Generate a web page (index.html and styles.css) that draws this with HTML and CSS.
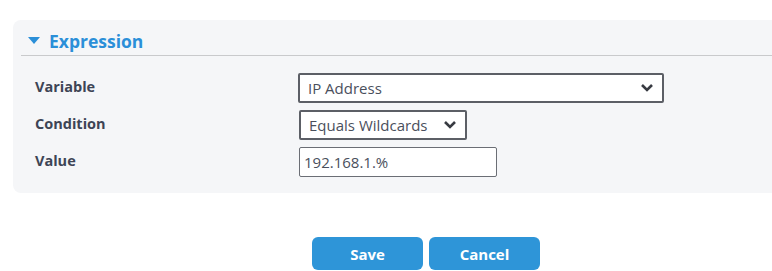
FILE: index.html
```html
<!DOCTYPE html>
<html lang="en">
<head>
    <meta charset="UTF-8">
    <title>Expression</title>
    <link rel="stylesheet" href="styles.css">
</head>
<body>

    <!-- Expression panel -->
    <section class="panel">
        <h2 class="panel-title"><span class="caret"></span>Expression</h2>

        <div class="form-grid">
            <label class="form-label" for="variable">Variable</label>
            <div class="field">
                <select id="variable" class="select select-wide">
                    <option>IP Address</option>
                </select>
            </div>

            <label class="form-label" for="condition">Condition</label>
            <div class="field">
                <select id="condition" class="select select-short">
                    <option>Equals Wildcards</option>
                </select>
            </div>

            <label class="form-label" for="value">Value</label>
            <div class="field">
                <input id="value" class="text-input" type="text" value="192.168.1.%">
            </div>
        </div>
    </section>

    <!-- Actions -->
    <div class="actions">
        <button class="btn">Save</button>
        <button class="btn">Cancel</button>
    </div>

</body>
</html>
```

FILE: styles.css
```css
/* General */
* { margin: 0; padding: 0; box-sizing: border-box; }
body {
    font-family: "Open Sans", "Noto Sans", sans-serif;
    background: #fff;
    color: #3d4455;
    overflow: hidden;
}

/* Panel */
.panel {
    margin: 20px 0 0 13px;
    height: 173px;
    padding: 0 0 0 8px;
    background: #f5f6f8;
    border-radius: 8px 0 0 8px;
}

.panel-title {
    display: flex;
    align-items: center;
    height: 36px;
    padding: 6px 0 0 7px;
    font-size: 17.5px;
    font-weight: 700;
    color: #2b8fd8;
    border-bottom: 1px solid #c9cacc;
}

.caret {
    width: 0;
    height: 0;
    margin-right: 9px;
    border-left: 6px solid transparent;
    border-right: 6px solid transparent;
    border-top: 7px solid #2b8fd8;
}

/* Form rows */
.form-grid {
    display: grid;
    grid-template-columns: 263px auto;
    grid-auto-rows: 30px;
    row-gap: 7px;
    padding: 17px 0 0 14px;
    align-items: center;
}

.form-label {
    font-size: 14.5px;
    font-weight: 700;
    color: #3d4455;
    line-height: 1;
    margin-top: -1px;
}

.field { display: flex; }

.select,
.text-input {
    height: 30px;
    font-family: inherit;
    font-size: 15px;
    color: #4a4f5c;
    background: #fff;
    border: 2px solid #5c5f66;
    border-radius: 2px;
    padding: 0 8px;
    appearance: none;
    -webkit-appearance: none;
    background-image: url("data:image/svg+xml,%3Csvg xmlns='http://www.w3.org/2000/svg' width='14' height='10' viewBox='0 0 14 10'%3E%3Cpath d='M2 2 L7 7 L12 2' fill='none' stroke='%23383b42' stroke-width='2.6'/%3E%3C/svg%3E");
    background-repeat: no-repeat;
    background-position: right 8px center;
}

.select-wide { width: 366px; }
.select-short { width: 168px; margin-left: 1px; }

.text-input {
    width: 198px;
    margin-left: 1px;
    padding: 0 4px;
    border-width: 1px;
    border-color: #6b6e75;
    background-image: none;
}

/* Buttons */
.actions {
    display: flex;
    gap: 6px;
    padding: 44px 0 0 312px;
}

.btn {
    width: 111px;
    height: 33px;
    background: #2e95d8;
    color: #fff;
    border: none;
    border-radius: 6px;
    font-family: "Open Sans", sans-serif;
    font-size: 15px;
    font-weight: 700;
}
```
